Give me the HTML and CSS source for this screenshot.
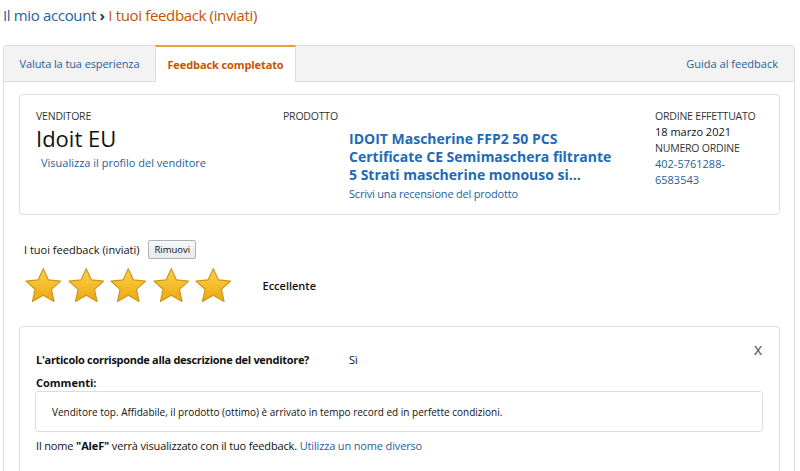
FILE: index.html
```html
<!DOCTYPE html>
<html lang="it">
<head>
<meta charset="utf-8">
<title>I tuoi feedback (inviati)</title>
<link rel="stylesheet" href="styles.css">
</head>
<body>
<div class="breadcrumb"><a class="crumb-link" href="#">Il mio account</a> <span class="crumb-sep">›</span> <span class="crumb-current">I tuoi feedback (inviati)</span></div>

<div class="panel">
  <div class="tabs">
    <div class="tab">Valuta la tua esperienza</div>
    <div class="tab tab-active">Feedback completato</div>
    <a class="tab-help" href="#">Guida al feedback</a>
  </div>
  <div class="panel-body">
    <div class="card order-card">
      <div class="col seller">
        <div class="label">VENDITORE</div>
        <div class="seller-name">Idoit EU</div>
        <a class="link small seller-link" href="#">Visualizza il profilo del venditore</a>
      </div>
      <div class="col product">
        <div class="label">PRODOTTO</div>
        <div class="product-info">
          <a class="product-title" href="#">IDOIT Mascherine FFP2 50 PCS Certificate CE Semimaschera filtrante 5 Strati mascherine monouso si...</a>
          <a class="link small review-link" href="#">Scrivi una recensione del prodotto</a>
        </div>
      </div>
      <div class="col order">
        <div class="label">ORDINE EFFETTUATO</div>
        <div class="value">18 marzo 2021</div>
        <div class="label">NUMERO ORDINE</div>
        <a class="link value" href="#">402-5761288-<br>6583543</a>
      </div>
    </div>

    <div class="feedback">
      <div class="feedback-head">
        <span>I tuoi feedback (inviati)</span>
        <button class="btn">Rimuovi</button>
      </div>
      <div class="rating">
        <div class="stars">
          <svg class="star" viewBox="0 0 40 38"><defs><linearGradient id="g" x1="0" y1="0" x2="0" y2="1"><stop offset="0" stop-color="#fcd24a"/><stop offset="1" stop-color="#eea70e"/></linearGradient></defs><path d="M20 1.5l5.3 11.6 12.7 1.4-9.5 8.6 2.7 12.5L20 29.2 8.8 35.6l2.7-12.5L2 14.5l12.7-1.4z" fill="url(#g)" stroke="#c9961c" stroke-width="1.2" stroke-linejoin="round"/></svg>
          <svg class="star" viewBox="0 0 40 38"><path d="M20 1.5l5.3 11.6 12.7 1.4-9.5 8.6 2.7 12.5L20 29.2 8.8 35.6l2.7-12.5L2 14.5l12.7-1.4z" fill="url(#g)" stroke="#c9961c" stroke-width="1.2" stroke-linejoin="round"/></svg>
          <svg class="star" viewBox="0 0 40 38"><path d="M20 1.5l5.3 11.6 12.7 1.4-9.5 8.6 2.7 12.5L20 29.2 8.8 35.6l2.7-12.5L2 14.5l12.7-1.4z" fill="url(#g)" stroke="#c9961c" stroke-width="1.2" stroke-linejoin="round"/></svg>
          <svg class="star" viewBox="0 0 40 38"><path d="M20 1.5l5.3 11.6 12.7 1.4-9.5 8.6 2.7 12.5L20 29.2 8.8 35.6l2.7-12.5L2 14.5l12.7-1.4z" fill="url(#g)" stroke="#c9961c" stroke-width="1.2" stroke-linejoin="round"/></svg>
          <svg class="star" viewBox="0 0 40 38"><path d="M20 1.5l5.3 11.6 12.7 1.4-9.5 8.6 2.7 12.5L20 29.2 8.8 35.6l2.7-12.5L2 14.5l12.7-1.4z" fill="url(#g)" stroke="#c9961c" stroke-width="1.2" stroke-linejoin="round"/></svg>
        </div>
        <span class="rating-text">Eccellente</span>
      </div>
    </div>

    <div class="card comments-card">
      <span class="close">X</span>
      <div class="question">
        <span class="q-text">L'articolo corrisponde alla descrizione del venditore?</span>
        <span class="q-answer">Sì</span>
      </div>
      <div class="comments-label">Commenti:</div>
      <div class="comment-box">Venditore top. Affidabile, il prodotto (ottimo) è arrivato in tempo record ed in perfette condizioni.</div>
      <div class="name-line">Il nome <b>"AleF"</b> verrà visualizzato con il tuo feedback. <a class="link" href="#">Utilizza un nome diverso</a></div>
    </div>
  </div>
</div>
</body>
</html>
```

FILE: styles.css
```css
* { box-sizing: border-box; }
html, body { margin: 0; padding: 0; background: #fff; }
body {
  font-family: "Open Sans", "Noto Sans", sans-serif;
  color: #111;
  font-size: 11px;
  width: 800px;
  height: 471px;
  overflow: hidden;
}
a { text-decoration: none; }
.link { color: #1f5f99; }

.breadcrumb {
  padding: 5px 0 0 3px;
  height: 45px;
  font-size: 15px;
  letter-spacing: -0.35px;
}
.crumb-link { color: #1f5f99; }
.crumb-sep { color: #333; font-weight: bold; }
.crumb-current { color: #c45500; }

.panel {
  margin: 0 5px 0 3px;
  border: 1px solid #ddd;
  border-radius: 3px 3px 0 0;
  height: 440px;
}
.tabs {
  display: flex;
  align-items: stretch;
  height: 36px;
  background: #f3f3f3;
  border-bottom: 1px solid #ddd;
}
.tab {
  width: 151px;
  display: flex;
  align-items: center;
  justify-content: center;
  color: #1f5f99;
  font-size: 11px;
  letter-spacing: -0.1px;
}
.tab-active {
  width: 141px;
  background: #fff;
  border-top: 2px solid #e6a23c;
  border-left: 1px solid #ddd;
  border-right: 1px solid #ddd;
  margin-top: -1px;
  margin-bottom: -1px;
  color: #c45500;
  font-weight: bold;
}
.tab-help {
  margin-left: auto;
  align-self: center;
  padding-right: 16px;
  color: #1f5f99;
  font-size: 11px;
}

.panel-body {
  padding: 12px 14px 0 15px;
}
.card {
  border: 1px solid #ddd;
  border-radius: 4px;
}
.order-card {
  display: grid;
  grid-template-columns: 247px 372px 1fr;
  height: 121px;
  padding: 13px 16px 0 16px;
}
.label {
  font-size: 10.5px;
  color: #333;
  line-height: 16px;
  white-space: nowrap;
  letter-spacing: -0.2px;
}
.seller-name {
  font-size: 22px;
  line-height: 28px;
  color: #111;
  font-weight: 500;
}
.seller-link {
  display: block;
  margin-left: 5px;
  margin-top: 3px;
  font-size: 11px;
}
.product-info {
  padding: 6px 0 0 66px;
  display: flex;
  flex-direction: column;
}
.product-title {
  color: #1e6ab5;
  font-weight: bold;
  font-size: 14px;
  line-height: 18px;
  width: 272px;
}
.review-link {
  margin-top: 2px;
  font-size: 11px;
  letter-spacing: -0.2px;
}
.order .value {
  display: block;
  line-height: 16px;
}

.feedback {
  padding: 25px 0 0 5px;
}
.feedback-head {
  display: flex;
  align-items: center;
  gap: 9px;
  height: 18px;
}
.btn {
  font-family: inherit;
  font-size: 9.5px;
  height: 19px;
  padding: 0 5px;
  background: linear-gradient(#f7f8fa, #e7e9ec);
  border: 1px solid #adb1b8;
  border-radius: 2px;
  color: #111;
}
.rating {
  display: flex;
  align-items: center;
  margin-top: 7px;
  height: 40px;
}
.stars { display: flex; gap: 4px; }
.star { width: 38.5px; height: 37px; display: block; }
.rating-text {
  margin-left: 30px;
  font-weight: 600;
  font-size: 11px;
}

.comments-card {
  position: relative;
  margin-top: 21px;
  padding: 25px 16px 0 16px;
  height: 160px;
  border-radius: 4px 4px 0 0;
}
.close {
  position: absolute;
  top: 14px;
  right: 17px;
  color: #666;
  font-size: 13px;
  font-weight: 600;
}
.question {
  display: flex;
  font-weight: bold;
  line-height: 16px;
}
.q-text { width: 313px; letter-spacing: -0.3px; }
.q-answer { font-weight: normal; }
.comments-label {
  font-weight: bold;
  margin-top: 7px;
  line-height: 16px;
}
.comment-box {
  border: 1px solid #ddd;
  border-radius: 3px;
  height: 41px;
  margin: 0 0 0 -1px;
  padding: 0 16px;
  display: flex;
  align-items: center;
  font-size: 10px;
}
.name-line {
  margin-top: 6px;
  line-height: 16px;
  letter-spacing: -0.15px;
}
```
